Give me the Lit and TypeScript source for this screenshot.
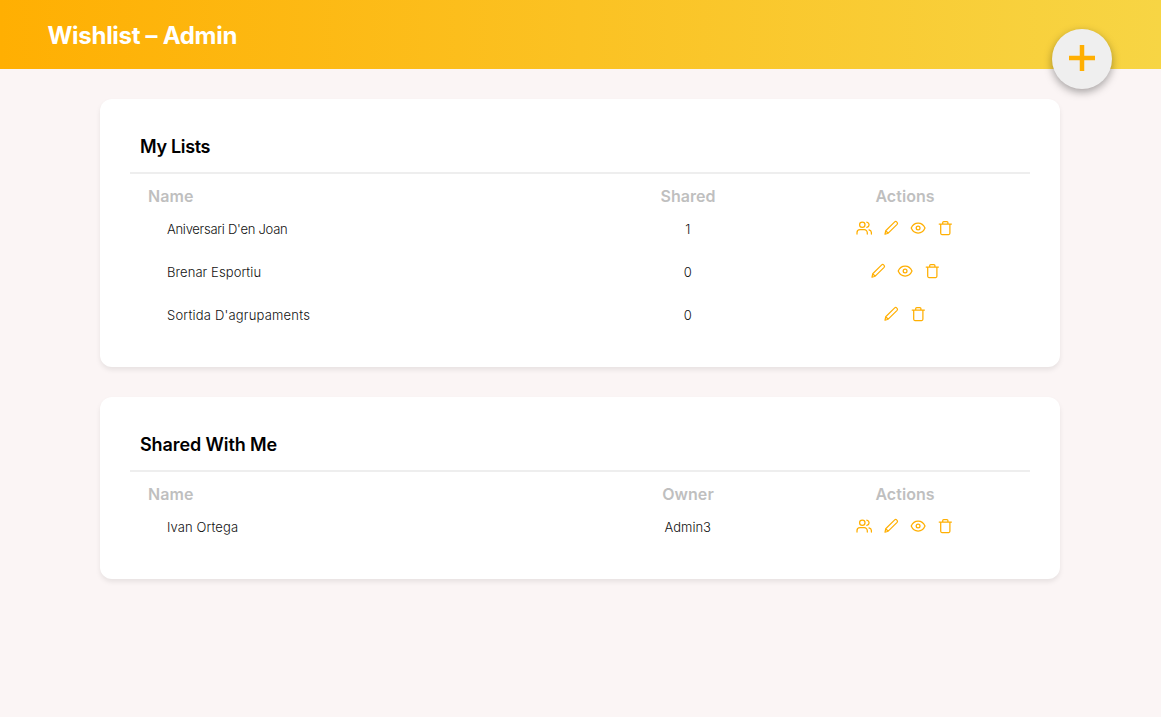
import { LitElement, html, css, svg } from "lit";
import { customElement, property } from "lit/decorators.js";

type Action = "share" | "edit" | "view" | "delete";

interface Row {
  name: string;
  value: string;
  spacing: number;
  actions: Action[];
}

const glyphs = {
  share: svg`<circle cx="6.300" cy="4.700" r="2.700"/><path d="M1 14v-1.300a3 3 0 0 1 3-3h4.300a3 3 0 0 1 3 3V14M10.800 2.100c1.700.4 2.300 1.500 2.300 2.600s-.6 2.200-2.300 2.600M13 9.900c1.500.4 2.400 1.500 2.400 2.900V14"/>`,
  edit: svg`<path d="M2 14.200l.7-3.400L11.700 1.900c.6-.6 1.400-.6 1.900 0l.5.500c.5.500.5 1.300 0 1.900L5.200 13.200zM2.700 10.800l2.500 2.400" stroke-width="1.200"/>`,
  view: svg`<path d="M1.200 8C2.600 4.700 5 3 8.100 3S13.600 4.700 15 8C13.600 11.300 11.200 13 8.100 13S2.600 11.300 1.200 8z"/><circle cx="8.100" cy="8" r="1.900"/>`,
  delete: svg`<path d="M2.200 4h12.200M3.700 4v9.300c0 .7.400 1.200 1.200 1.200h6.800c.8 0 1.200-.5 1.200-1.200V4M5.700 3.800V2.600c0-.7.400-1 1-1h3.200c.6 0 1 .3 1 1v1.200"/>`,
};

@customElement("wish-card")
class WishCard extends LitElement {
  @property() heading = "";
  @property({ type: Number }) tracking = 0;
  @property() column = "";
  @property({ attribute: false }) rows: Row[] = [];

  static styles = css`
    :host {
      display: block;
      box-sizing: border-box;
      padding: 30px;
      background: #fff;
      border-radius: 12px;
      box-shadow: 0 3px 5px rgba(0, 0, 0, 0.08);
    }
    h2 {
      margin: 0;
      height: 45px;
      padding: 0 10px;
      border-bottom: 2px solid #eee;
      box-sizing: border-box;
      font-size: 18px;
      line-height: 35px;
      font-weight: 600;
    }
    .row {
      display: grid;
      grid-template-columns: 466px 183.5px 250px;
      align-items: center;
      height: 43px;
      font-size: 13px;
      font-weight: 300;
      color: #111;
    }
    .row > .name,
    .row > .value {
      padding-bottom: 2px;
    }
    .head {
      box-sizing: border-box;
      grid-template-columns: 466px 184px 250px;
      height: 34px;
      padding-top: 11px;
      color: #bfbfbf;
      font-size: 16px;
      font-weight: 600;
      letter-spacing: 0.05px;
    }
    .name {
      padding-left: 37px;
    }
    .head > .name {
      padding-left: 18px;
    }
    .value {
      text-align: center;
    }
    .actions {
      display: flex;
      justify-content: center;
      gap: 11px;
    }
    svg {
      display: block;
      width: 16px;
      height: 16px;
      margin-bottom: 4px;
      fill: none;
      stroke: #ffaf02;
      stroke-width: 1.25;
      stroke-linecap: round;
      stroke-linejoin: round;
    }
  `;

  render() {
    return html`
      <h2 style="letter-spacing:${this.tracking}px">${this.heading}</h2>
      <div class="row head">
        <span class="name">Name</span>
        <span class="value">${this.column}</span>
        <span class="value">Actions</span>
      </div>
      ${this.rows.map(
        (r) => html`<div class="row">
          <span class="name" style="letter-spacing:${r.spacing}px">${r.name}</span>
          <span class="value">${r.value}</span>
          <span class="actions">
            ${r.actions.map((a) => html`<svg viewBox="0 0 16 16">${glyphs[a]}</svg>`)}
          </span>
        </div>`
      )}
    `;
  }
}

@customElement("app-root")
class AppRoot extends LitElement {
  static styles = css`
    :host {
      display: block;
      min-height: 100vh;
      background: #fbf5f5;
      font-family: Inter, sans-serif;
      color: #000;
    }
    header {
      position: relative;
      display: flex;
      align-items: center;
      box-sizing: border-box;
      height: 69px;
      padding: 2px 48px 0 47.5px;
      background: linear-gradient(90deg, #ffaf02, #f7d544);
    }
    h1 {
      margin: 0;
      color: #fff;
      font-size: 24px;
      font-weight: 700;
      letter-spacing: -0.29px;
    }
    .add {
      position: absolute;
      right: 49px;
      top: 29px;
      display: grid;
      place-items: center;
      width: 60px;
      height: 60px;
      padding: 0 0 2px;
      border: 0;
      border-radius: 50%;
      background: #efefef;
      box-shadow: 0 3px 8px rgba(0, 0, 0, 0.35);
    }
    .add svg {
      width: 26px;
      height: 26px;
      stroke: #ffaf02;
      stroke-width: 4.5;
    }
    main {
      display: grid;
      gap: 30px;
      width: 960px;
      margin: 0 auto;
      padding: 30px 1px 30px 0;
    }
  `;

  private mine: Row[] = [
    { name: "Aniversari D'en Joan", value: "1", spacing: -0.27, actions: ["share", "edit", "view", "delete"] },
    { name: "Brenar Esportiu", value: "0", spacing: 0.08, actions: ["edit", "view", "delete"] },
    { name: "Sortida D'agrupaments", value: "0", spacing: 0.2, actions: ["edit", "delete"] },
  ];

  private shared: Row[] = [
    { name: "Ivan Ortega", value: "Admin3", spacing: 0.1, actions: ["share", "edit", "view", "delete"] },
  ];

  render() {
    return html`
      <header>
        <h1>Wishlist – Admin</h1>
        <button class="add" aria-label="Add list">
          <svg viewBox="0 0 26 26"><path d="M13 0v26M0 13h26" /></svg>
        </button>
      </header>
      <main>
        <wish-card heading="My Lists" tracking="-0.32" column="Shared" .rows=${this.mine}></wish-card>
        <wish-card heading="Shared With Me" tracking="-0.1" column="Owner" .rows=${this.shared}></wish-card>
      </main>
    `;
  }
}
